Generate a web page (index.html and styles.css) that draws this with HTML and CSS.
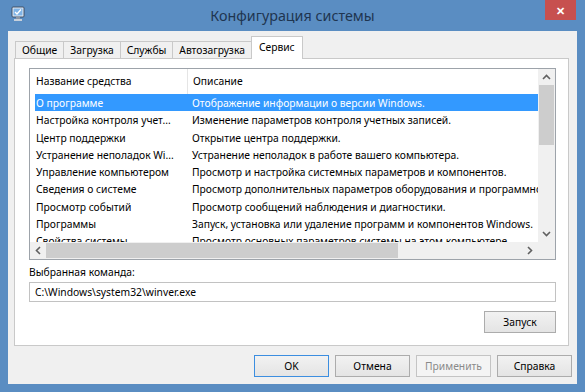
FILE: index.html
```html
<!DOCTYPE html>
<html lang="ru">
<head>
  <meta charset="UTF-8">
  <title>Конфигурация системы</title>
  <link rel="stylesheet" href="styles.css">
</head>
<body>
  <div class="window">
    <!-- Title bar -->
    <div class="titlebar">
      <div class="app-icon">
        <svg width="14" height="16" viewBox="0 0 14 16">
          <rect x="1" y="1" width="12" height="10" rx="1" fill="#e8eef6" stroke="#3d4f66" stroke-width="1"/>
          <rect x="2.5" y="2.5" width="9" height="7" fill="#7fb3e6"/>
          <polyline points="4,6 6,8 10,3.5" fill="none" stroke="#ffffff" stroke-width="1.3"/>
          <rect x="5" y="11" width="4" height="2" fill="#8a96a6"/>
          <rect x="3" y="13" width="8" height="2" fill="#c7d0db"/>
        </svg>
      </div>
      <div class="title">Конфигурация системы</div>
      <div class="title-right">
        <div class="close-btn">&#x2715;</div>
      </div>
    </div>

    <div class="client">
      <!-- Tabs -->
      <div class="tabs">
        <div class="tab">Общие</div>
        <div class="tab">Загрузка</div>
        <div class="tab">Службы</div>
        <div class="tab">Автозагрузка</div>
        <div class="tab active">Сервис</div>
      </div>

      <div class="panel">
        <div class="list">
          <div class="list-view">
            <div class="list-header">
              <div class="col-name">Название средства</div>
              <div class="col-desc">Описание</div>
            </div>
            <div class="row selected">
              <div class="col-name">О программе</div>
              <div class="col-desc">Отображение информации о версии Windows.</div>
            </div>
            <div class="row">
              <div class="col-name">Настройка контроля учет...</div>
              <div class="col-desc">Изменение параметров контроля учетных записей.</div>
            </div>
            <div class="row">
              <div class="col-name">Центр поддержки</div>
              <div class="col-desc">Открытие центра поддержки.</div>
            </div>
            <div class="row">
              <div class="col-name">Устранение неполадок Wi...</div>
              <div class="col-desc">Устранение неполадок в работе вашего компьютера.</div>
            </div>
            <div class="row">
              <div class="col-name">Управление компьютером</div>
              <div class="col-desc">Просмотр и настройка системных параметров и компонентов.</div>
            </div>
            <div class="row">
              <div class="col-name">Сведения о системе</div>
              <div class="col-desc">Просмотр дополнительных параметров оборудования и программного обеспечения.</div>
            </div>
            <div class="row">
              <div class="col-name">Просмотр событий</div>
              <div class="col-desc">Просмотр сообщений наблюдения и диагностики.</div>
            </div>
            <div class="row">
              <div class="col-name">Программы</div>
              <div class="col-desc">Запуск, установка или удаление программ и компонентов Windows.</div>
            </div>
            <div class="row">
              <div class="col-name">Свойства системы</div>
              <div class="col-desc">Просмотр основных параметров системы на этом компьютере.</div>
            </div>
          </div>

          <!-- Vertical scrollbar -->
          <div class="vscroll">
            <svg class="arrow" width="9" height="6" viewBox="0 0 9 6"><polyline points="1,5 4.5,1.5 8,5" fill="none" stroke="#606060" stroke-width="1.6"/></svg>
            <div class="vtrack"><div class="vthumb"></div></div>
            <svg class="arrow" width="9" height="6" viewBox="0 0 9 6"><polyline points="1,1 4.5,4.5 8,1" fill="none" stroke="#606060" stroke-width="1.6"/></svg>
          </div>

          <!-- Horizontal scrollbar -->
          <div class="hscroll">
            <svg class="arrow" width="6" height="9" viewBox="0 0 6 9"><polyline points="5,1 1.5,4.5 5,8" fill="none" stroke="#606060" stroke-width="1.6"/></svg>
            <div class="htrack"><div class="hthumb"></div></div>
            <svg class="arrow" width="6" height="9" viewBox="0 0 6 9"><polyline points="1,1 4.5,4.5 1,8" fill="none" stroke="#606060" stroke-width="1.6"/></svg>
          </div>
          <div class="corner"></div>
        </div>

        <div class="cmd-label">Выбранная команда:</div>
        <div class="cmd-input">C:\Windows\system32\winver.exe</div>

        <div class="launch-row">
          <button class="btn">Запуск</button>
        </div>
      </div>

      <!-- Dialog buttons -->
      <div class="dialog-buttons">
        <button class="btn btn-default">OK</button>
        <button class="btn">Отмена</button>
        <button class="btn" disabled>Применить</button>
        <button class="btn">Справка</button>
      </div>
    </div>
  </div>
</body>
</html>
```

FILE: styles.css
```css
/* Page */
body {
  margin: 0;
  font-family: "Noto Sans", "Open Sans", sans-serif;
  font-size: 10.3px;
  color: #000000;
}

/* Window frame */
.window {
  width: 585px;
  height: 392px;
  background-color: #5a8dc2;
  box-sizing: border-box;
  padding-bottom: 8px;
}

/* Title bar */
.titlebar {
  height: 31px;
  display: grid;
  grid-template-columns: 1fr auto 1fr;
  align-items: start;
}

.app-icon {
  padding: 6px 0 0 11px;
}

.title {
  font-size: 14.3px;
  color: #1f3550;
  line-height: 20px;
  padding-top: 6px;
}

.title-right {
  display: flex;
  justify-content: flex-end;
  padding-right: 9px;
}

.close-btn {
  width: 31px;
  height: 20px;
  background-color: #c7504f;
  color: #ffffff;
  font-size: 11px;
  font-weight: bold;
  display: flex;
  align-items: center;
  justify-content: center;
}

/* Client area */
.client {
  margin: 0 8px;
  height: 353px;
  background-color: #f0f0f0;
  display: flex;
  flex-direction: column;
}

/* Tabs */
.tabs {
  display: flex;
  align-items: flex-end;
  height: 22px;
  margin-top: 5px;
  padding-left: 8px;
}

.tab {
  height: 16px;
  line-height: 16px;
  padding: 0 6px;
  border: 1px solid #c9c9c9;
  border-bottom: none;
  margin-left: -1px;
  background-color: #f0f0f0;
}

.tab.active {
  height: 22px;
  line-height: 20px;
  padding: 0 7px;
  background-color: #ffffff;
  position: relative;
  margin-bottom: -1px;
  z-index: 1;
}

/* Tab page */
.panel {
  margin: 0 8px 0 6px;
  height: 288px;
  box-sizing: border-box;
  border: 1px solid #c9c9c9;
  background-color: #ffffff;
  padding: 9px 12px 0 14px;
  display: flex;
  flex-direction: column;
}

/* List view */
.list {
  height: 192px;
  box-sizing: border-box;
  border: 1px solid #9da3aa;
  display: grid;
  grid-template-columns: 1fr 17px;
  grid-template-rows: 1fr 17px;
  overflow: hidden;
}

.list-view {
  overflow: hidden;
  white-space: nowrap;
}

.list-header {
  display: flex;
  height: 25px;
  line-height: 25px;
}

.list-header .col-name {
  width: 151px;
  padding-left: 6px;
  border-right: 1px solid #e5e5e5;
}

.list-header .col-desc {
  padding-left: 5px;
}

.row {
  display: flex;
  height: 17.25px;
  line-height: 18px;
  margin-left: 5px;
}

.row .col-name {
  width: 150px;
  padding-left: 1px;
  flex-shrink: 0;
}

.row .col-desc {
  padding-left: 6px;
}

.row.selected {
  background-color: #3399ff;
  color: #ffffff;
}

/* Scrollbars */
.vscroll {
  background-color: #f0f0f0;
  display: flex;
  flex-direction: column;
  align-items: center;
}

.vscroll .arrow {
  margin: 5px 0;
}

.vtrack {
  flex: 1;
  width: 15px;
}

.vthumb {
  height: 60px;
  background-color: #cdcdcd;
}

.hscroll {
  background-color: #f0f0f0;
  display: flex;
  align-items: center;
}

.hscroll .arrow {
  margin: 0 5px;
}

.htrack {
  flex: 1;
  height: 15px;
}

.hthumb {
  width: 352px;
  height: 15px;
  background-color: #cdcdcd;
}

.corner {
  background-color: #f0f0f0;
}

/* Selected command */
.cmd-label {
  margin-top: 4px;
  line-height: 17px;
}

.cmd-input {
  margin-top: 1px;
  height: 20px;
  line-height: 18px;
  box-sizing: border-box;
  border: 1px solid #c2c2c2;
  padding-left: 5px;
}

.launch-row {
  display: flex;
  justify-content: flex-end;
  margin-top: 9px;
}

/* Buttons */
.btn {
  font-family: "Noto Sans", "Open Sans", sans-serif;
  font-size: 10.3px;
  width: 72px;
  height: 22px;
  padding: 0;
  border: 1px solid #acacac;
  background: linear-gradient(#f2f2f2, #e4e4e4);
  color: #000000;
}

.btn-default {
  border-color: #3c8ee0;
}

.btn:disabled {
  background: #f4f4f4;
  border-color: #c4c4c4;
  color: #8a8a8a;
}

.dialog-buttons {
  display: flex;
  justify-content: flex-end;
  gap: 6px;
  margin-top: 9px;
  padding-right: 5px;
}

.dialog-buttons .btn {
  width: 75px;
}
```
